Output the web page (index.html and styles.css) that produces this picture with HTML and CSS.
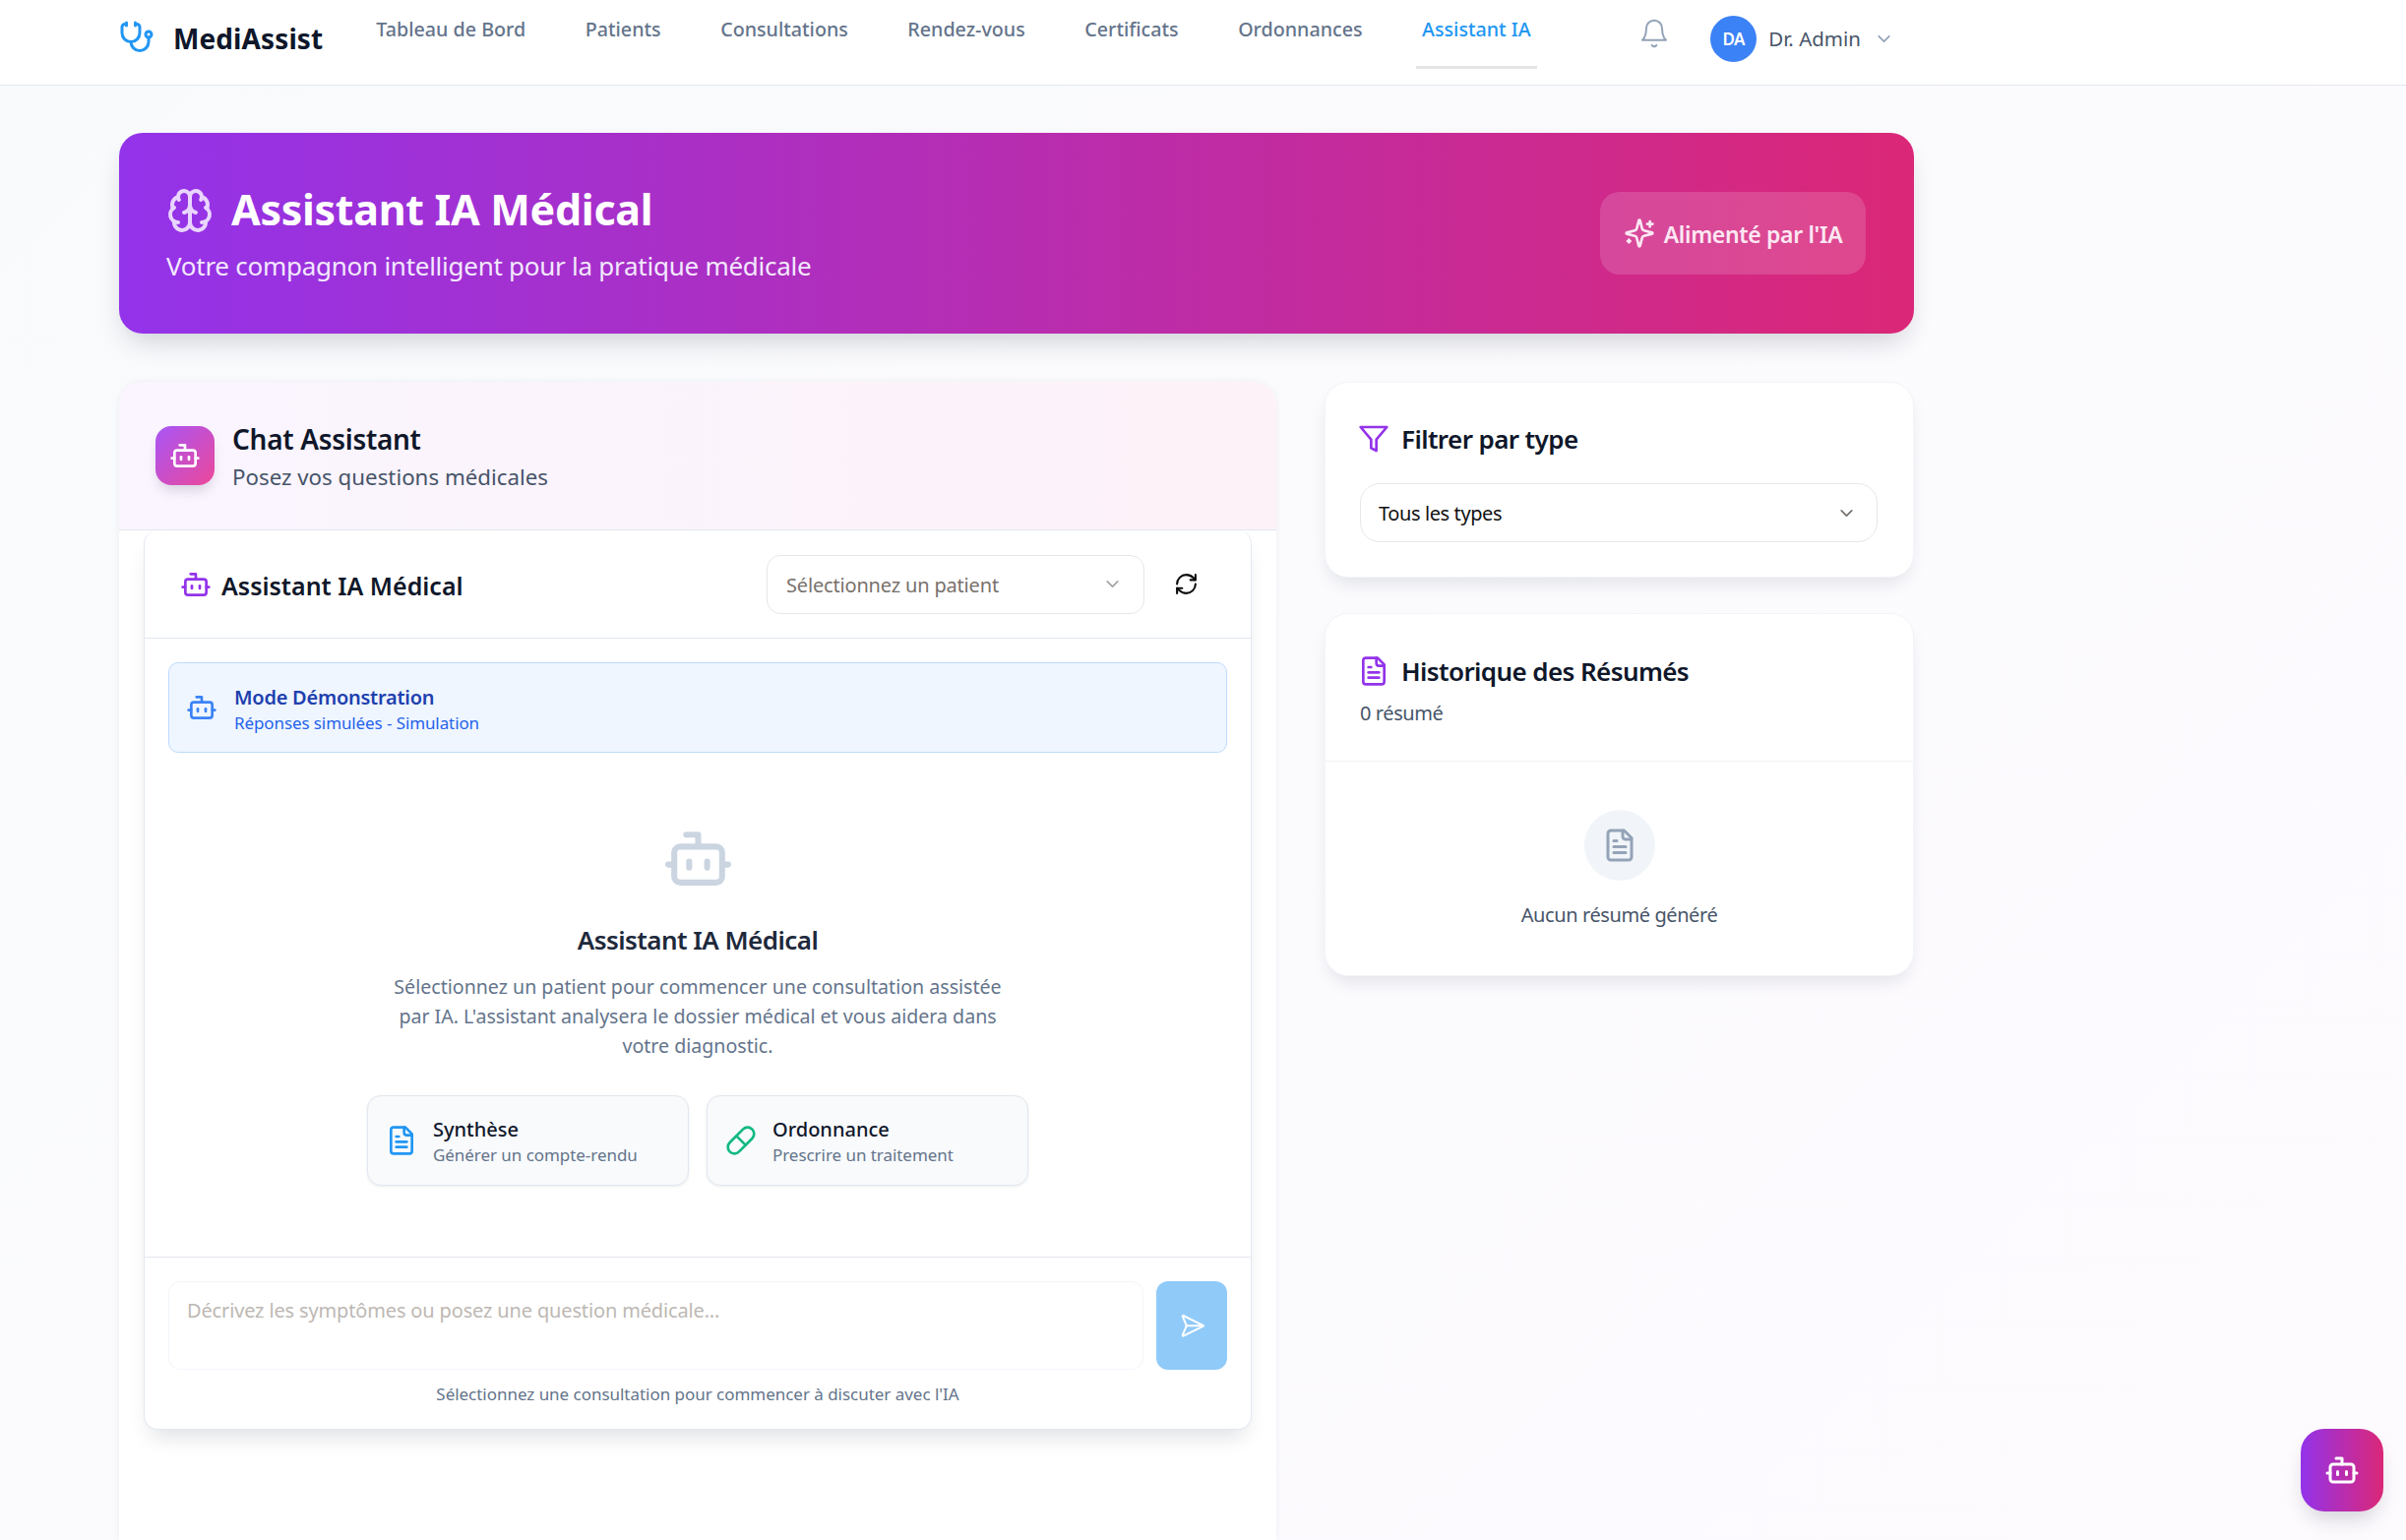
FILE: index.html
```html
<!DOCTYPE html>
<html lang="fr">
  <head>
    <meta charset="UTF-8"/>
    <title>MediAssist - Assistant IA</title>
    <link rel="stylesheet" href="styles.css">
  </head>
  <body>

    <header class="topbar">
      <div class="topbar-in">
        <a class="logo">
          <svg class="ico logo-ico" viewBox="0 0 24 24"><path d="M11 2v2"/><path d="M5 2v2"/><path d="M5 3H4a2 2 0 0 0-2 2v4a6 6 0 0 0 12 0V5a2 2 0 0 0-2-2h-1"/><path d="M8 15a6 6 0 0 0 12 0v-3"/><circle cx="20" cy="10" r="2"/></svg>
          <span>MediAssist</span>
        </a>
        <nav class="nav">
          <a>Tableau de Bord</a>
          <a>Patients</a>
          <a>Consultations</a>
          <a>Rendez-vous</a>
          <a>Certificats</a>
          <a>Ordonnances</a>
          <a class="on">Assistant IA</a>
        </nav>
        <div class="tools">
          <svg class="ico bell" viewBox="0 0 24 24"><path d="M6 8a6 6 0 0 1 12 0c0 7 3 9 3 9H3s3-2 3-9"/><path d="M10.3 21a1.94 1.94 0 0 0 3.4 0"/></svg>
          <div class="user">
            <span class="avatar">DA</span>
            <span class="user-name">Dr. Admin</span>
            <svg class="ico user-chev" viewBox="0 0 24 24"><path d="m6 9 6 6 6-6"/></svg>
          </div>
        </div>
      </div>
    </header>

    <main class="page">
      <section class="hero">
        <div>
          <h1>
            <svg class="ico brain" viewBox="0 0 24 24"><path d="M12 18V5"/><path d="M15 13a4.17 4.17 0 0 1-3-4 4.17 4.17 0 0 1-3 4"/><path d="M17.598 6.5A3 3 0 1 0 12 5a3 3 0 1 0-5.598 1.5"/><path d="M17.997 5.125a4 4 0 0 1 2.526 5.77"/><path d="M18 18a4 4 0 0 0 2-7.464"/><path d="M19.967 17.483A4 4 0 1 1 12 18a4 4 0 1 1-7.967-.517"/><path d="M6 18a4 4 0 0 1-2-7.464"/><path d="M6.003 5.125a4 4 0 0 0-2.526 5.77"/></svg>
            Assistant IA Médical
          </h1>
          <p>Votre compagnon intelligent pour la pratique médicale</p>
        </div>
        <div class="hero-badge">
          <svg class="ico" viewBox="0 0 24 24"><path d="M9.937 15.5A2 2 0 0 0 8.5 14.063l-6.135-1.582a.5.5 0 0 1 0-.962L8.5 9.936A2 2 0 0 0 9.937 8.5l1.582-6.135a.5.5 0 0 1 .963 0L14.063 8.5A2 2 0 0 0 15.5 9.937l6.135 1.581a.5.5 0 0 1 0 .964L15.5 14.063a2 2 0 0 0-1.437 1.437l-1.582 6.135a.5.5 0 0 1-.963 0z"/><path d="M20 3v4"/><path d="M22 5h-4"/><path d="M4 17v2"/><path d="M5 18H3"/></svg>
          <span>Alimenté par l'IA</span>
        </div>
      </section>

      <div class="cols">
        <section class="chat-card">
          <div class="chat-head">
            <span class="chat-badge">
              <svg class="ico" viewBox="0 0 24 24"><path d="M12 8V4H8"/><rect width="16" height="12" x="4" y="8" rx="2"/><path d="M2 14h2"/><path d="M20 14h2"/><path d="M15 13v2"/><path d="M9 13v2"/></svg>
            </span>
            <div>
              <h2>Chat Assistant</h2>
              <p>Posez vos questions médicales</p>
            </div>
          </div>

          <div class="panel">
            <div class="panel-head">
              <svg class="ico purple" viewBox="0 0 24 24"><path d="M12 8V4H8"/><rect width="16" height="12" x="4" y="8" rx="2"/><path d="M2 14h2"/><path d="M20 14h2"/><path d="M15 13v2"/><path d="M9 13v2"/></svg>
              <h3>Assistant IA Médical</h3>
              <div class="select patient">
                <span>Sélectionnez un patient</span>
                <svg class="ico" viewBox="0 0 24 24"><path d="m6 9 6 6 6-6"/></svg>
              </div>
              <svg class="ico refresh" viewBox="0 0 24 24"><path d="M3 12a9 9 0 0 1 9-9 9.75 9.75 0 0 1 6.74 2.74L21 8"/><path d="M21 3v5h-5"/><path d="M21 12a9 9 0 0 1-9 9 9.75 9.75 0 0 1-6.74-2.74L3 16"/><path d="M8 16H3v5"/></svg>
            </div>

            <div class="panel-body">
              <div class="demo">
                <svg class="ico" viewBox="0 0 24 24"><path d="M12 8V4H8"/><rect width="16" height="12" x="4" y="8" rx="2"/><path d="M2 14h2"/><path d="M20 14h2"/><path d="M15 13v2"/><path d="M9 13v2"/></svg>
                <div>
                  <strong>Mode Démonstration</strong>
                  <small>Réponses simulées - Simulation</small>
                </div>
              </div>

              <div class="empty">
                <svg class="ico empty-bot" viewBox="0 0 24 24"><path d="M12 8V4H8"/><rect width="16" height="12" x="4" y="8" rx="2"/><path d="M2 14h2"/><path d="M20 14h2"/><path d="M15 13v2"/><path d="M9 13v2"/></svg>
                <h4>Assistant IA Médical</h4>
                <p>Sélectionnez un patient pour commencer une consultation assistée par IA. L'assistant analysera le dossier médical et vous aidera dans votre diagnostic.</p>
                <div class="quick">
                  <div class="quick-item">
                    <svg class="ico blue" viewBox="0 0 24 24"><path d="M15 2H6a2 2 0 0 0-2 2v16a2 2 0 0 0 2 2h12a2 2 0 0 0 2-2V7Z"/><path d="M14 2v4a2 2 0 0 0 2 2h4"/><path d="M10 9H8"/><path d="M16 13H8"/><path d="M16 17H8"/></svg>
                    <div>
                      <strong>Synthèse</strong>
                      <small>Générer un compte-rendu</small>
                    </div>
                  </div>
                  <div class="quick-item">
                    <svg class="ico green" viewBox="0 0 24 24"><path d="m10.5 20.5 10-10a4.95 4.95 0 1 0-7-7l-10 10a4.95 4.95 0 1 0 7 7Z"/><path d="m8.5 8.5 7 7"/></svg>
                    <div>
                      <strong>Ordonnance</strong>
                      <small>Prescrire un traitement</small>
                    </div>
                  </div>
                </div>
              </div>
            </div>

            <div class="composer">
              <div class="composer-row">
                <div class="composer-input">Décrivez les symptômes ou posez une question médicale...</div>
                <button class="send">
                  <svg class="ico" viewBox="0 0 24 24"><path d="M14.536 21.686a.5.5 0 0 0 .937-.024l6.5-19a.496.496 0 0 0-.635-.635l-19 6.5a.5.5 0 0 0-.024.937l7.93 3.18a2 2 0 0 1 1.112 1.11z"/><path d="m21.854 2.147-10.94 10.939"/></svg>
                </button>
              </div>
              <p>Sélectionnez une consultation pour commencer à discuter avec l'IA</p>
            </div>
          </div>
        </section>

        <aside class="side">
          <section class="side-card filter">
            <h3>
              <svg class="ico purple" viewBox="0 0 24 24"><polygon points="22 3 2 3 10 12.46 10 19 14 21 14 12.46 22 3"/></svg>
              Filtrer par type
            </h3>
            <div class="select types">
              <span>Tous les types</span>
              <svg class="ico" viewBox="0 0 24 24"><path d="m6 9 6 6 6-6"/></svg>
            </div>
          </section>

          <section class="side-card">
            <div class="hist-head">
              <h3>
                <svg class="ico purple" viewBox="0 0 24 24"><path d="M15 2H6a2 2 0 0 0-2 2v16a2 2 0 0 0 2 2h12a2 2 0 0 0 2-2V7Z"/><path d="M14 2v4a2 2 0 0 0 2 2h4"/><path d="M10 9H8"/><path d="M16 13H8"/><path d="M16 17H8"/></svg>
                Historique des Résumés
              </h3>
              <p>0 résumé</p>
            </div>
            <div class="hist-empty">
              <span class="hist-circle">
                <svg class="ico" viewBox="0 0 24 24"><path d="M15 2H6a2 2 0 0 0-2 2v16a2 2 0 0 0 2 2h12a2 2 0 0 0 2-2V7Z"/><path d="M14 2v4a2 2 0 0 0 2 2h4"/><path d="M10 9H8"/><path d="M16 13H8"/><path d="M16 17H8"/></svg>
              </span>
              <p>Aucun résumé généré</p>
            </div>
          </section>
        </aside>
      </div>
    </main>

    <button class="fab">
      <svg class="ico" viewBox="0 0 24 24"><path d="M12 8V4H8"/><rect width="16" height="12" x="4" y="8" rx="2"/><path d="M2 14h2"/><path d="M20 14h2"/><path d="M15 13v2"/><path d="M9 13v2"/></svg>
    </button>

  </body>
</html>
```

FILE: styles.css
```css
html { height: 100%; overflow: hidden; }
body { margin: 0; height: 1565px; overflow: hidden; color: #0f172a; font-family: "Noto Sans", sans-serif; font-size: 18px;
  background: linear-gradient(135deg, #f8fafc, #fefbff); }
h1, h2, h3, h4, p { margin: 0; }

.ico { display: block; flex: none; fill: none; stroke: currentColor; stroke-width: 2; stroke-linecap: round; stroke-linejoin: round; }
.purple { color: #9333ea; }
.blue { color: #2196f3; }
.green { color: #10b981; }

/* top bar */
.topbar { height: 86px; background: #fff; border-bottom: 1px solid #e2e8f0; }
.topbar-in { width: 1804px; margin-left: 121px; padding-right: 20px; height: 86px; display: flex; justify-content: space-between; }
.logo { display: flex; align-items: center; gap: 19px; height: 78px; font-size: 28px; font-weight: 700; color: #0f172a; letter-spacing: .1px; }
.logo-ico { width: 36px; height: 36px; color: #2196f3; margin-top: -2px; }
.nav { display: flex; gap: 48.5px; margin-left: 48px; margin-right: auto; }
.nav a { display: block; height: 70px; padding: 17px 6px 0; box-sizing: border-box; font-size: 19.7px; line-height: 26px; font-weight: 500; color: #64748b; }
.nav a.on { color: #2196f3; border-bottom: 3px solid #e5e5e5; }
.tools { display: flex; align-items: center; height: 78px; gap: 41px; }
.bell { width: 32px; height: 32px; color: #94a3b8; stroke-width: 1.5; margin-top: -10px; }
.user { display: flex; align-items: center; gap: 12px; }
.avatar { width: 47px; height: 47px; border-radius: 50%; background: #3b82f6; color: #fff; font-size: 17px; font-weight: 600; display: flex; align-items: center; justify-content: center; letter-spacing: -.5px; }
.user-name { font-size: 20.5px; color: #475569; }
.user-chev { width: 21px; height: 21px; color: #94a3b8; margin-left: 1px; }

/* page */
.page { width: 1824px; margin-left: 121px; padding-top: 48px; }
.hero { height: 204px; box-sizing: border-box; padding: 0 49px 0 48px; border-radius: 24px; display: flex; align-items: center; justify-content: space-between;
  background: linear-gradient(90deg, #9333ea, #db2777); color: #fff; box-shadow: 0 14px 28px -8px rgba(15, 23, 42, .2); }
.hero h1 { display: flex; align-items: center; gap: 18px; font-size: 43px; line-height: 62px; font-weight: 700; letter-spacing: -.3px; margin-top: -5px; }
.brain { width: 48px; height: 48px; color: #e9d5ff; margin-top: 2px; }
.hero p { font-size: 26px; line-height: 36px; color: #f3e8ff; letter-spacing: -.26px; margin-top: 8px; }
.hero-badge { width: 270px; height: 84px; box-sizing: border-box; display: flex; align-items: center; justify-content: center; gap: 9px; border-radius: 20px; background: rgba(255, 255, 255, .15); font-size: 23px; font-weight: 600; color: #fce7f3; letter-spacing: -.35px; }
.hero-badge .ico { width: 32px; height: 32px; }
.hero-badge span { margin-top: 2px; }

.cols { display: grid; grid-template-columns: 1176px 599px; gap: 49px; margin-top: 49px; align-items: start; }

/* chat */
.chat-card { height: 1177px; background: #fff; border-radius: 24px 24px 0 0; box-shadow: 0 0 6px rgba(15, 23, 42, .06); }
.chat-head { height: 151px; box-sizing: border-box; border-bottom: 1px solid #e2e8f0; border-radius: 24px 24px 0 0; padding: 0 37px; display: flex; align-items: center; gap: 18px; background: linear-gradient(90deg, #faf5ff, #fdf2f8); }
.chat-badge { width: 60px; height: 60px; border-radius: 16px; background: linear-gradient(135deg, #a855f7, #ec4899); display: flex; align-items: center; justify-content: center; color: #fff; box-shadow: 0 8px 14px -4px rgba(15, 23, 42, .18); }
.chat-badge .ico { width: 32px; height: 32px; }
.chat-head h2 { font-size: 28px; line-height: 38px; font-weight: 600; letter-spacing: -.3px; margin-top: 2px; }
.chat-head p { font-size: 22.3px; line-height: 34px; color: #475569; margin-top: 3px; }

.panel { width: 1126px; margin-left: 25px; height: 914px; background: #fff; border: 1px solid #e2e8f0; border-top: 0; box-sizing: border-box; border-radius: 14px; box-shadow: 0 14px 22px -8px rgba(15, 23, 42, .14); display: flex; flex-direction: column; }
.panel-head { height: 110px; box-sizing: border-box; border-bottom: 1px solid #e2e8f0; display: flex; align-items: center; padding: 0 53px 0 36px; }
.panel-head > .ico.purple { width: 32px; height: 32px; }
.panel-head h3 { font-size: 25px; font-weight: 600; margin-left: 10px; margin-right: auto; margin-top: 2px; }
.select { display: flex; align-items: center; justify-content: space-between; background: #fff; border: 1px solid #e5e7eb; box-sizing: border-box; }
.select .ico { width: 21px; height: 21px; }
.patient { width: 384px; height: 60px; border-radius: 14px; padding: 0 21px 0 19px; font-size: 20px; color: #78716c; letter-spacing: -.17px; }
.patient span { margin-top: 2px; }
.patient .ico { color: #a8a29e; }
.refresh { width: 25px; height: 25px; color: #0a0a0a; margin-left: 30px; }

.panel-body { flex: 1; padding: 24px 24px 0; }
.demo { height: 92px; box-sizing: border-box; display: flex; align-items: center; gap: 17px; padding: 0 17px; background: #eff6ff; border: 1px solid #bfdbfe; border-radius: 10px; }
.demo .ico { width: 32px; height: 32px; color: #3b82f6; }
.demo strong { display: block; font-size: 20px; line-height: 28px; font-weight: 600; color: #1e40af; letter-spacing: -.25px; margin-top: 3px; }
.demo small { display: block; font-size: 17px; line-height: 24px; color: #2563eb; letter-spacing: -.1px; }

.empty { display: flex; flex-direction: column; align-items: center; text-align: center; padding-top: 71px; }
.empty-bot { width: 73px; height: 73px; color: #cbd5e1; }
.empty h4 { font-size: 26px; line-height: 38px; font-weight: 600; color: #1e293b; letter-spacing: -.55px; margin-top: 27px; }
.empty p { width: 640px; font-size: 19.6px; line-height: 30px; color: #64748b; margin-top: 14px; }
.quick { display: flex; gap: 18px; margin-top: 35px; text-align: left; }
.quick-item { width: 327px; height: 92px; box-sizing: border-box; display: flex; align-items: center; gap: 16px; padding: 0 18px; background: #f8fafc; border: 1px solid #e2e8f0; border-radius: 14px; box-shadow: 0 1px 3px rgba(15, 23, 42, .08); }
.quick-item .ico { width: 32px; height: 32px; }
.quick-item strong { display: block; font-size: 20px; line-height: 28px; font-weight: 500; color: #0f172a; margin-top: 2px; }
.quick-item small { display: block; font-size: 17px; line-height: 24px; color: #64748b; letter-spacing: -.05px; }

.composer { height: 175px; box-sizing: border-box; border-top: 1px solid #e2e8f0; padding: 24px 24px 0; }
.composer-row { display: flex; gap: 13px; }
.composer-input { flex: 1; height: 90px; box-sizing: border-box; padding: 14px 18px; border: 1px solid #f1f5f9; border-radius: 12px; font-size: 20px; line-height: 30px; color: #bdb8b3; letter-spacing: -.15px; }
.send { width: 72px; height: 90px; border: 0; padding: 0; border-radius: 12px; background: #90caf9; color: #fff; display: flex; align-items: center; justify-content: center; }
.send .ico { width: 26.67px; height: 26.67px; transform: translateX(-4px) rotate(45deg); stroke-width: 1.8; }
.composer p { text-align: center; font-size: 17px; line-height: 24px; color: #64748b; letter-spacing: -.03px; margin-top: 13px; }

/* side */
.side { display: flex; flex-direction: column; gap: 36px; }
.side-card { background: #fff; border: 1px solid #f1f5f9; box-sizing: border-box; border-radius: 24px; box-shadow: 0 10px 20px -6px rgba(15, 23, 42, .12); }
.filter { height: 199px; padding: 39px 36px 0 35px; }
.side-card h3 { display: flex; align-items: center; gap: 12px; font-size: 26px; line-height: 36px; font-weight: 600; letter-spacing: -.6px; }
.side-card h3 .ico { width: 32px; height: 32px; margin-left: -2px; }
.types { height: 60px; margin-top: 27px; border-radius: 20px; padding: 0 20px 0 18px; font-size: 20px; color: #111; letter-spacing: -.4px; }
.types .ico { color: #78716c; }
.hist-head { height: 150px; box-sizing: border-box; padding: 40px 36px 0 35px; border-bottom: 1px solid #f1f5f9; }
.hist-head p { font-size: 20px; line-height: 30px; color: #475569; letter-spacing: -.4px; margin-top: 10px; }
.hist-empty { height: 217px; display: flex; flex-direction: column; align-items: center; padding-top: 49px; box-sizing: border-box; }
.hist-circle { width: 72px; height: 72px; border-radius: 50%; background: #f1f5f9; display: flex; align-items: center; justify-content: center; color: #94a3b8; }
.hist-circle .ico { width: 36px; height: 36px; }
.hist-empty p { font-size: 20px; line-height: 30px; color: #475569; letter-spacing: -.4px; margin-top: 20px; }

.fab { position: fixed; left: 2338px; top: 1452px; width: 84px; height: 84px; border: 0; padding: 0; border-radius: 24px; background: linear-gradient(90deg, #9333ea, #db2777); color: #fff; display: flex; align-items: center; justify-content: center; box-shadow: 0 12px 22px -6px rgba(15, 23, 42, .2); }
.fab .ico { width: 36px; height: 36px; }
```
